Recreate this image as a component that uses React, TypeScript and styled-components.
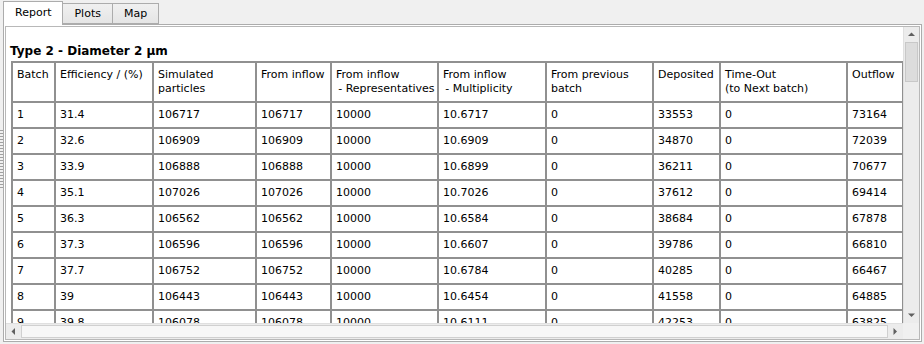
import React from "react";
import styled, { createGlobalStyle } from "styled-components";

const GlobalStyle = createGlobalStyle`
  html, body {
    margin: 0;
    padding: 0;
    background: #f0f0f0;
  }
  body {
    font-family: "DejaVu Sans", Tahoma, sans-serif;
    font-size: 11px;
    color: #000;
  }
`;

interface Row {
  batch: string;
  efficiency: string;
  simulated: string;
  inflow: string;
  representatives: string;
  multiplicity: string;
  previous: string;
  deposited: string;
  timeOut: string;
  outflow: string;
}

// second header lines starting with "-" are slightly indented in the original
const headers = [
  ["Batch"],
  ["Efficiency / (%)"],
  ["Simulated", "particles"],
  ["From inflow"],
  ["From inflow", "\u2009- Representatives"],
  ["From inflow", "\u2009- Multiplicity"],
  ["From previous", "batch"],
  ["Deposited"],
  ["Time-Out", "(to Next batch)"],
  ["Outflow"]
];

// widths taken from the grid lines, border included
const columnWidths = [43, 98, 103, 75, 107, 108, 107, 67, 127, 56];

const rows: Row[] = [
  ["1", "31.4", "106717", "106717", "10000", "10.6717", "0", "33553", "0", "73164"],
  ["2", "32.6", "106909", "106909", "10000", "10.6909", "0", "34870", "0", "72039"],
  ["3", "33.9", "106888", "106888", "10000", "10.6899", "0", "36211", "0", "70677"],
  ["4", "35.1", "107026", "107026", "10000", "10.7026", "0", "37612", "0", "69414"],
  ["5", "36.3", "106562", "106562", "10000", "10.6584", "0", "38684", "0", "67878"],
  ["6", "37.3", "106596", "106596", "10000", "10.6607", "0", "39786", "0", "66810"],
  ["7", "37.7", "106752", "106752", "10000", "10.6784", "0", "40285", "0", "66467"],
  ["8", "39", "106443", "106443", "10000", "10.6454", "0", "41558", "0", "64885"],
  ["9", "39.8", "106078", "106078", "10000", "10.6111", "0", "42253", "0", "63825"]
].map(r => ({
  batch: r[0],
  efficiency: r[1],
  simulated: r[2],
  inflow: r[3],
  representatives: r[4],
  multiplicity: r[5],
  previous: r[6],
  deposited: r[7],
  timeOut: r[8],
  outflow: r[9]
}));

const tabs = ["Report", "Plots", "Map"];

const Arrow = ({ dir }: { dir: "up" | "down" | "left" | "right" }) => {
  const points = {
    up: "0,4 3.5,0.5 7,4",
    down: "0,0.5 3.5,4 7,0.5",
    left: "4,0 0.5,3.5 4,7",
    right: "0.5,0 4,3.5 0.5,7"
  }[dir];
  const horizontal = dir === "left" || dir === "right";
  return (
    <svg
      width={horizontal ? 5 : 7}
      height={horizontal ? 7 : 5}
      viewBox={horizontal ? "0 0 5 7" : "0 0 7 5"}
    >
      <polygon points={points} fill="#606060" />
    </svg>
  );
};

const App: React.FC = () => {
  return (
    <>
      <GlobalStyle />
      <Window>
        <Grip />
        <TabWidget>
          <TabBar>
            {tabs.map((tab, i) => (
              <Tab key={tab} $active={i === 0}>
                {tab}
              </Tab>
            ))}
          </TabBar>
          <Pane>
            <Browser>
              <Viewport>
                <Title>Type 2 - Diameter 2 µm</Title>
                <Table>
                  <colgroup>
                    {columnWidths.map((w, i) => (
                      <col key={i} style={{ width: w }} />
                    ))}
                  </colgroup>
                  <thead>
                    <tr>
                      {headers.map((lines, i) => (
                        <HeadCell key={i}>
                          {lines.map((l, j) => (
                            <div key={j}>{l}</div>
                          ))}
                        </HeadCell>
                      ))}
                    </tr>
                  </thead>
                  <tbody>
                    {rows.map(row => (
                      <tr key={row.batch}>
                        <Cell>{row.batch}</Cell>
                        <Cell>{row.efficiency}</Cell>
                        <Cell>{row.simulated}</Cell>
                        <Cell>{row.inflow}</Cell>
                        <Cell>{row.representatives}</Cell>
                        <Cell>{row.multiplicity}</Cell>
                        <Cell>{row.previous}</Cell>
                        <Cell>{row.deposited}</Cell>
                        <Cell>{row.timeOut}</Cell>
                        <Cell>{row.outflow}</Cell>
                      </tr>
                    ))}
                  </tbody>
                </Table>
              </Viewport>
              <VScroll>
                <ArrowButton>
                  <Arrow dir="up" />
                </ArrowButton>
                <VThumb />
                <VTrack />
                <ArrowButton>
                  <Arrow dir="down" />
                </ArrowButton>
              </VScroll>
              <HScroll>
                <ArrowButton>
                  <Arrow dir="left" />
                </ArrowButton>
                <HThumb />
                <ArrowButton>
                  <Arrow dir="right" />
                </ArrowButton>
              </HScroll>
              <Corner />
            </Browser>
          </Pane>
        </TabWidget>
      </Window>
    </>
  );
};

const Window = styled.div`
  width: 924px;
  height: 344px;
  display: flex;
  position: relative;
  overflow: hidden;
`;

const Grip = styled.div`
  position: absolute;
  left: 0;
  top: 130px;
  width: 3px;
  height: 60px;
  background-image: repeating-linear-gradient(
    to bottom,
    #a0a0a0 0px,
    #a0a0a0 1px,
    transparent 1px,
    transparent 3px
  );
`;

const TabWidget = styled.div`
  flex: 1;
  display: flex;
  flex-direction: column;
  padding: 1px 2px 2px 3px;
  min-height: 0;
`;

const TabBar = styled.div`
  display: flex;
  align-items: flex-end;
  height: 23px;
  flex: 0 0 23px;
  position: relative;
  z-index: 1;
`;

const Tab = styled.div<{ $active: boolean }>`
  box-sizing: border-box;
  height: ${p => (p.$active ? "24px" : "21px")};
  margin-bottom: ${p => (p.$active ? "-1px" : "0")};
  padding: ${p => (p.$active ? "4px 11px 0 11px" : "3px 11px 0 11px")};
  border: 1px solid #acacac;
  border-bottom: ${p => (p.$active ? "none" : "1px solid #acacac")};
  margin-left: ${p => (p.$active ? "0" : "-1px")};
  background: ${p =>
    p.$active ? "#ffffff" : "linear-gradient(to bottom, #f0f0f0, #e5e5e5)"};
  line-height: 14px;
  white-space: nowrap;
`;

const Pane = styled.div`
  flex: 1;
  min-height: 0;
  border: 1px solid #acacac;
  background: #ffffff;
  padding: 1px;
  display: flex;
`;

const Browser = styled.div`
  flex: 1;
  min-height: 0;
  border: 1px solid #b8b8b8;
  display: grid;
  grid-template-columns: minmax(0, 1fr) 16px;
  grid-template-rows: minmax(0, 1fr) 16px;
`;

const Viewport = styled.div`
  overflow: hidden;
  min-height: 0;
  padding: 17px 0 0 4px;
  background: #ffffff;
`;

const Title = styled.div`
  font-weight: bold;
  font-size: 12px;
  line-height: 14px;
  margin-bottom: 3px;
`;

const Table = styled.table`
  margin-left: 1px;
  border: 1px solid #909090;
  border-collapse: separate;
  border-spacing: 0;
  table-layout: fixed;
  width: 892px;
`;

const HeadCell = styled.td`
  box-sizing: border-box;
  border: 1px solid #909090;
  padding: 5px 4px 5px 4px;
  line-height: 14px;
  vertical-align: top;
  white-space: pre;
  height: 40px;
`;

const Cell = styled.td`
  box-sizing: border-box;
  border: 1px solid #909090;
  padding: 5px 4px;
  line-height: 14px;
  height: 26px;
  white-space: nowrap;
`;

const VScroll = styled.div`
  display: flex;
  flex-direction: column;
  background: #ececec;
  border-left: 1px solid #e0e0e0;
`;

const ArrowButton = styled.div`
  flex: 0 0 15px;
  display: flex;
  align-items: center;
  justify-content: center;
`;

const VThumb = styled.div`
  height: 38px;
  margin: 0 1px;
  background: #dcdcdc;
  border: 1px solid #c8c8c8;
`;

const VTrack = styled.div`
  flex: 1;
`;

const HScroll = styled.div`
  display: flex;
  background: #ececec;
  border-top: 1px solid #e0e0e0;
`;

const HThumb = styled.div`
  flex: 1;
  margin: 1px 0;
  background: #f7f7f7;
  border: 1px solid #d0d0d0;
`;

const Corner = styled.div`
  background: #f0f0f0;
`;

export default App;
